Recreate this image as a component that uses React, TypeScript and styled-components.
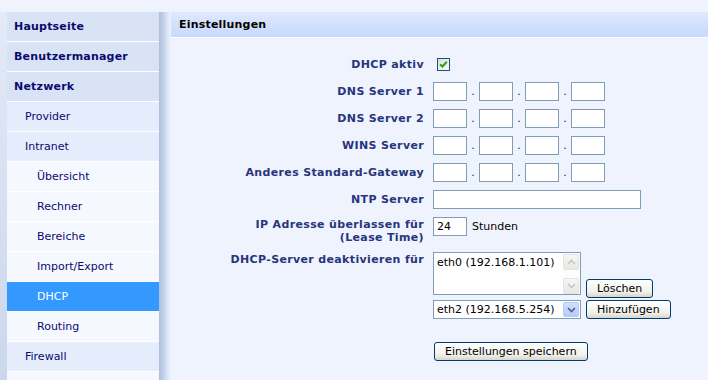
import styled, { createGlobalStyle } from "styled-components";

const GlobalStyle = createGlobalStyle`
    html, body {
        margin: 0;
        height: 100%;
        overflow: hidden;
        background: #eef3fe;
        font-family: "DejaVu Sans", Verdana, sans-serif;
        font-size: 11px;
    }
`

const Layout = styled.div`
    display: flex;
    margin-top: 12px;
    height: 368px;
    overflow: hidden;
    padding-left: 7px;
    background: linear-gradient(to bottom, #e3eaf8, #cbd7ec);
    background-size: 7px 100%;
    background-repeat: no-repeat;
`

const Sidebar = styled.nav`
    width: 152px;
    display: flex;
    flex-direction: column;
`

const NavItem = styled.div<{ $level: number; $active?: boolean }>`
    flex-shrink: 0;
    height: 29px;
    line-height: 30px;
    border-bottom: 1px solid #ffffff;
    padding-left: ${(p) => (p.$level === 1 ? 7 : p.$level === 2 ? 18 : 30)}px;
    font-weight: ${(p) => (p.$level === 1 ? "bold" : "normal")};
    letter-spacing: ${(p) => (p.$level === 1 ? "0.2px" : "0")};
    color: ${(p) => (p.$active ? "#ffffff" : "#0b0b6e")};
    background: ${(p) =>
        p.$active ? "#3399ff" : p.$level === 1 ? "#d9e3f6" : p.$level === 2 ? "#e5edfd" : "#f6f8ff"};
    white-space: nowrap;
`

const Shadow = styled.div`
    width: 12px;
    flex-shrink: 0;
    background: linear-gradient(to right, #aebfde 0, #bccbe6 30%, #dbe4f5 70%, #eef3fe 100%);
`

const Main = styled.main`
    flex: 1;
    display: flex;
    flex-direction: column;
`

const PanelHeader = styled.h2`
    margin: 0;
    height: 25px;
    line-height: 25px;
    padding-left: 8px;
    font-size: 11px;
    font-weight: bold;
    letter-spacing: 0.2px;
    color: #000;
    background: linear-gradient(to bottom, #dfe8fd, #c7d9fd);
    border-bottom: 1px solid #ffffff;
`

const Form = styled.form`
    display: grid;
    grid-template-columns: 253px auto;
    column-gap: 9px;
    row-gap: 8px;
    padding-top: 17px;
    justify-content: start;
`

const Label = styled.div<{ $top?: boolean }>`
    text-align: right;
    font-weight: bold;
    letter-spacing: 0.35px;
    color: #27357a;
    line-height: 13px;
    align-self: ${(p) => (p.$top ? "start" : "center")};
    padding-top: ${(p) => (p.$top ? "1px" : "0")};
`

const Field = styled.div<{ $top?: boolean }>`
    display: flex;
    align-items: center;
    min-height: 19px;
    align-self: ${(p) => (p.$top ? "start" : "center")};
`

const CheckBox = styled.span`
    width: 13px;
    height: 13px;
    box-sizing: border-box;
    margin-left: 4px;
    border: 1px solid #1c5180;
    background: linear-gradient(135deg, #dcdcd7, #fbfbf9);
    display: flex;
`

const TextBox = styled.input<{ $width: number }>`
    width: ${(p) => p.$width}px;
    height: 19px;
    box-sizing: border-box;
    margin: 0;
    padding: 0 3px;
    border: 1px solid #7f9db9;
    background: #ffffff;
    font-family: "DejaVu Sans", Verdana, sans-serif;
    font-size: 11px;
    color: #000;
    outline: none;
`

const Dot = styled.span`
    width: 12px;
    text-align: center;
    line-height: 19px;
    color: #1d2b6b;
`

const Unit = styled.span`
    margin-left: 5px;
    color: #000;
`

const DeviceGrid = styled.div`
    display: grid;
    grid-template-columns: 148px auto;
    grid-template-rows: 46px 19px;
    column-gap: 5px;
    row-gap: 2px;
    align-self: start;
`

const ListBox = styled.div`
    height: 43px;
    box-sizing: border-box;
    border: 1px solid #7f9db9;
    background: #fff;
    display: flex;
    align-self: start;
`

const ListText = styled.div`
    flex: 1;
    padding: 3px 0 0 3px;
    color: #000;
    line-height: 13px;
`

const ScrollTrack = styled.div`
    width: 17px;
    padding: 1px 1px 0 0;
    box-sizing: border-box;
    display: flex;
    flex-direction: column;
    justify-content: space-between;
    background: #fdfdfb;
`

const ScrollButton = styled.div`
    height: 16px;
    box-sizing: border-box;
    border: 1px solid #e0e3ea;
    border-radius: 2px;
    background: linear-gradient(to bottom, #f7f7f3, #e8e8e2);
    display: flex;
    align-items: center;
    justify-content: center;
`

const SelectBox = styled.div`
    height: 19px;
    box-sizing: border-box;
    border: 1px solid #7f9db9;
    background: #fff;
    display: flex;
    align-items: center;
    padding: 0 1px 0 3px;
`

const SelectText = styled.span`
    flex: 1;
    color: #000;
`

const DropButton = styled.span`
    width: 16px;
    height: 15px;
    box-sizing: border-box;
    border: 1px solid #b6c9f2;
    border-radius: 2px;
    background: linear-gradient(to bottom, #d2dffd, #b5cbfa);
    display: flex;
    align-items: center;
    justify-content: center;
`

const Button = styled.button<{ $end?: boolean }>`
    height: 19px;
    padding: 0 10px;
    margin: 0;
    justify-self: start;
    align-self: ${(p) => (p.$end ? "end" : "start")};
    border: 1px solid #003c74;
    border-radius: 3px;
    background: linear-gradient(to bottom, #ffffff, #f1f0ea 70%, #d8d4c8);
    font-family: "DejaVu Sans", Verdana, sans-serif;
    font-size: 11px;
    color: #000;
    line-height: 17px;
    white-space: nowrap;
`

const SaveRow = styled.div`
    grid-column: 2;
    margin-top: 15px;
    padding-left: 1px;
`

const Chevron = ({ up, color }: { up?: boolean; color: string }) => (
    <svg width="9" height="6" viewBox="0 0 9 6">
        <path
            d={up ? "M1 5 L4.5 1.5 L8 5" : "M1 1 L4.5 4.5 L8 1"}
            fill="none"
            stroke={color}
            strokeWidth="1.6"
        />
    </svg>
)

const IpInput = () => (
    <Field>
        <TextBox $width={34} readOnly value="" />
        <Dot>.</Dot>
        <TextBox $width={34} readOnly value="" />
        <Dot>.</Dot>
        <TextBox $width={34} readOnly value="" />
        <Dot>.</Dot>
        <TextBox $width={34} readOnly value="" />
    </Field>
)

const menu = [
    { label: "Hauptseite", level: 1 },
    { label: "Benutzermanager", level: 1 },
    { label: "Netzwerk", level: 1 },
    { label: "Provider", level: 2 },
    { label: "Intranet", level: 2 },
    { label: "Übersicht", level: 3 },
    { label: "Rechner", level: 3 },
    { label: "Bereiche", level: 3 },
    { label: "Import/Export", level: 3 },
    { label: "DHCP", level: 3, active: true },
    { label: "Routing", level: 3 },
    { label: "Firewall", level: 2 },
    { label: "", level: 3 },
]

export default function App() {
    return (
        <>
            <GlobalStyle />
            <Layout>
                <Sidebar>
                    {menu.map((m, i) => (
                        <NavItem key={i} $level={m.level} $active={m.active}>
                            {m.label}
                        </NavItem>
                    ))}
                </Sidebar>
                <Shadow />
                <Main>
                    <PanelHeader>Einstellungen</PanelHeader>
                    <Form onSubmit={(e) => e.preventDefault()}>
                        <Label>DHCP aktiv</Label>
                        <Field>
                            <CheckBox>
                                <svg width="11" height="11" viewBox="0 0 11 11">
                                    <path d="M2.2 5.2 L4.4 7.6 L8.8 2.8" fill="none" stroke="#21a121" strokeWidth="2" />
                                </svg>
                            </CheckBox>
                        </Field>

                        <Label>DNS Server 1</Label>
                        <IpInput />
                        <Label>DNS Server 2</Label>
                        <IpInput />
                        <Label>WINS Server</Label>
                        <IpInput />
                        <Label>Anderes Standard-Gateway</Label>
                        <IpInput />

                        <Label>NTP Server</Label>
                        <Field>
                            <TextBox $width={208} readOnly value="" />
                        </Field>

                        <Label $top>
                            IP Adresse überlassen für
                            <br />
                            (Lease Time)
                        </Label>
                        <Field $top>
                            <TextBox $width={34} readOnly value="24" />
                            <Unit>Stunden</Unit>
                        </Field>

                        <Label $top>DHCP-Server deaktivieren für</Label>
                        <DeviceGrid>
                            <ListBox>
                                <ListText>eth0 (192.168.1.101)</ListText>
                                <ScrollTrack>
                                    <ScrollButton>
                                        <Chevron up color="#c3c7cf" />
                                    </ScrollButton>
                                    <ScrollButton>
                                        <Chevron color="#c3c7cf" />
                                    </ScrollButton>
                                </ScrollTrack>
                            </ListBox>
                            <Button type="button" $end>Löschen</Button>
                            <SelectBox>
                                <SelectText>eth2 (192.168.5.254)</SelectText>
                                <DropButton>
                                    <Chevron color="#4d6185" />
                                </DropButton>
                            </SelectBox>
                            <Button type="button">Hinzufügen</Button>
                        </DeviceGrid>

                        <SaveRow>
                            <Button type="submit">Einstellungen speichern</Button>
                        </SaveRow>
                    </Form>
                </Main>
            </Layout>
        </>
    )
}
